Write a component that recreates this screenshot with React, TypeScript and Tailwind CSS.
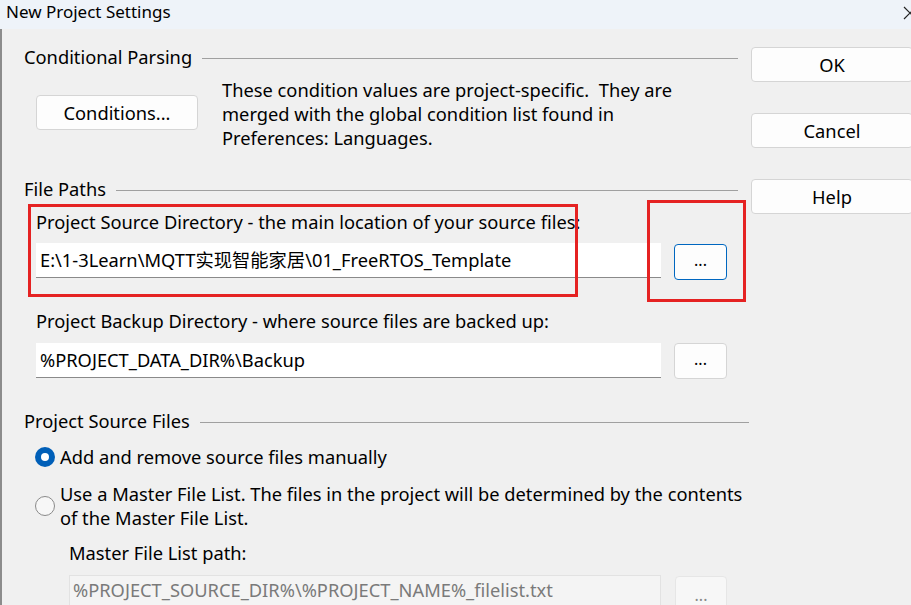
import React from "react";

const font = { fontFamily: '"Noto Sans", "Noto Sans CJK SC", sans-serif' };

function SectionHeader({ title, lineEnd }: { title: string; lineEnd: string }) {
  return (
    <div className={`flex items-center h-[24px] ${lineEnd}`}>
      <span className="whitespace-nowrap">{title}</span>
      <div className="flex-1 h-px bg-[#a0a0a0] ml-[10px] mt-[2px]" />
    </div>
  );
}

function Btn({
  children,
  className = "",
  focus = false,
}: {
  children: React.ReactNode;
  className?: string;
  focus?: boolean;
}) {
  return (
    <div
      className={`flex items-center justify-center rounded-[4px] border bg-[#fdfdfd] ${
        focus ? "border-[#0067c0]" : "border-[#d5d5d5]"
      } ${className}`}
    >
      {children}
    </div>
  );
}

function Radio({ checked }: { checked: boolean }) {
  return checked ? (
    <div className="w-[20px] h-[20px] rounded-full bg-[#005fb8] flex items-center justify-center shrink-0">
      <div className="w-[8px] h-[8px] rounded-full bg-white" />
    </div>
  ) : (
    <div className="w-[20px] h-[20px] rounded-full border border-[#8a8a8a] bg-[#f7f7f7] shrink-0" />
  );
}

export default function App() {
  return (
    <div
      className="relative w-[911px] h-[605px] overflow-hidden bg-[#f0f0f0] text-black text-[18.3px] leading-[24px]"
      style={font}
    >
      {/* title bar */}
      <div className="h-[29px] bg-[#eef3f9] flex items-center pl-[6px] relative">
        <span className="text-[17px] leading-[24px] -mt-[5px]">New Project Settings</span>
        <svg className="absolute left-[903px] top-[6px]" width="14" height="14" viewBox="0 0 14 14">
          <path d="M1 1 L13 13 M13 1 L1 13" stroke="#222" strokeWidth="1.2" fill="none" />
        </svg>
      </div>
      <div className="absolute left-0 top-[29px] bottom-0 w-[2px] bg-[#8c8c8c]" />

      <div className="flex">
        {/* left column */}
        <div className="pl-[24px] w-[749px] flex flex-col">
          <div className="mt-[16px]">
            <SectionHeader title="Conditional Parsing" lineEnd="mr-[11px]" />
          </div>
          <div className="flex mt-[9px]">
            <Btn className="ml-[12px] mt-[17px] w-[162px] h-[35px]">Conditions...</Btn>
            <div className="ml-[24px] w-[462px]">
              These condition values are project-specific.&nbsp; They are merged with the global condition list found in
              Preferences: Languages.
            </div>
          </div>

          <div className="mt-[27px]">
            <SectionHeader title="File Paths" lineEnd="mr-[11px]" />
          </div>
          <div className="ml-[12px] mt-[9px] whitespace-nowrap">
            Project Source Directory - the main location of your source files:
          </div>
          <div className="flex ml-[12px] mt-[9px] items-start">
            <div className="w-[625px] h-[35px] bg-white border-b border-[#8a8a8a] flex items-center pl-[4px] whitespace-nowrap">
              E:\1-3Learn\MQTT实现智能家居\01_FreeRTOS_Template
            </div>
            <Btn focus className="ml-[13px] mt-[1px] w-[53px] h-[36px]">
              <span className="-mt-[4px] text-[16px]">...</span>
            </Btn>
          </div>
          <div className="ml-[12px] mt-[29px] whitespace-nowrap">
            Project Backup Directory - where source files are backed up:
          </div>
          <div className="flex ml-[12px] mt-[10px] items-start">
            <div className="w-[625px] h-[35px] bg-white border-b border-[#8a8a8a] flex items-center pl-[4px] whitespace-nowrap">
              %PROJECT_DATA_DIR%\Backup
            </div>
            <Btn className="ml-[13px] w-[53px] h-[36px]">
              <span className="-mt-[4px] text-[16px]">...</span>
            </Btn>
          </div>

          <div className="mt-[30px]">
            <SectionHeader title="Project Source Files" lineEnd="" />
          </div>
          <div className="flex items-center ml-[11px] mt-[12px]">
            <Radio checked />
            <span className="ml-[5px]">Add and remove source files manually</span>
          </div>
          <div className="flex items-center ml-[11px] mt-[13px]">
            <Radio checked={false} />
            <span className="ml-[5px] w-[700px]">
              Use a Master File List. The files in the project will be determined by the contents
              <br />
              of the Master File List.
            </span>
          </div>
          <div className="ml-[45px] mt-[11px]">Master File List path:</div>
          <div className="flex ml-[45px] mt-[10px] items-start">
            <div className="w-[592px] h-[40px] bg-[#f4f4f4] border border-[#e2e2e2] flex items-start pt-[2px] pl-[3px] whitespace-nowrap text-[#7a7a7a]">
              %PROJECT_SOURCE_DIR%\%PROJECT_NAME%_filelist.txt
            </div>
            <div className="ml-[14px] mt-[1px] w-[52px] h-[40px] rounded-[4px] border border-[#e6e6e6] bg-[#f7f7f7] flex justify-center pt-[6px] text-[16px] text-[#888]">
              ...
            </div>
          </div>
        </div>

        {/* right column */}
        <div className="flex flex-col ml-[2px] shrink-0">
          <Btn className="mt-[18px] w-[162px] h-[35px]">OK</Btn>
          <Btn className="mt-[31px] w-[162px] h-[35px]">Cancel</Btn>
          <Btn className="mt-[31px] w-[162px] h-[35px]">Help</Btn>
        </div>
      </div>

      {/* red annotation boxes */}
      <div className="absolute left-[28px] top-[204px] w-[550px] h-[93px] border-[3px] border-[#e52222]" />
      <div className="absolute left-[647px] top-[200px] w-[99px] h-[102px] border-[3px] border-[#e52222]" />
    </div>
  );
}
